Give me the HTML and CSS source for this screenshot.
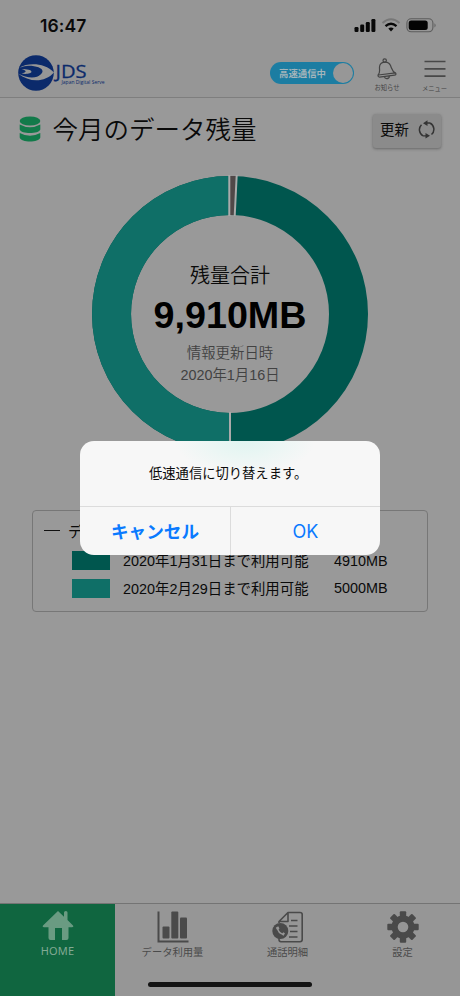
FILE: index.html
```html
<!DOCTYPE html>
<html lang="ja">
<head>
<meta charset="utf-8">
<title>JDS</title>
<link rel="stylesheet" href="styles.css">
</head>
<body>
<div class="screen">
  <header class="header">
    <div class="status">
      <span class="clock">16:47</span>
      <svg class="status-icons" width="84" height="16" viewBox="0 0 84 16">
        <g fill="#080808">
          <rect x="0.5" y="9" width="4" height="5" rx="1.2"/><rect x="6.2" y="6.5" width="4" height="7.500" rx="1.2"/><rect x="11.800" y="4" width="4" height="10" rx="1.2"/><rect x="17.400" y="1" width="4" height="13" rx="1.2"/>
          <path d="M37 13.500L34.300 10.600Q37 8.600 39.700 10.600Z"/>
        </g>
        <path d="M28.500 5Q37-2.500 45.500 5" fill="none" stroke="#777" stroke-width="2"/>
        <path d="M31.500 8.200Q37 3.400 42.500 8.200" fill="none" stroke="#080808" stroke-width="2.300"/>
        <rect x="52.900" y="0.800" width="26" height="13" rx="4.200" fill="none" stroke="#5c5c5c" stroke-width="1.100"/>
        <rect x="54.700" y="2.600" width="19" height="9.500" rx="2.500" fill="#030303"/>
        <path d="M80.500 5.200Q82.700 7.300 80.500 9.500Z" fill="#5c5c5c"/>
      </svg>
    </div>
    <div class="bar">
      <svg class="logo" width="90" height="38" viewBox="0 0 90 38">
        <circle cx="18" cy="19" r="17.800" fill="#0b2a6b"/>
        <path d="M1.500 13.500C10 8.500 27 8.500 36 18.500C27 28.500 12 29 0 19.500C9 24.500 19 24.500 22.500 20.500C28 14.500 13 10.500 1.500 13.500Z" fill="#969696"/>
        <path d="M4 12.500C13 10.500 25 13 24.500 17.500C24.200 21.500 13 24 5 20.800C12 21.500 18 20 18.500 17.800C19 15.500 11 12.500 4 12.500Z" fill="#0b2a6b"/>
        <path d="M3.500 15C9 15 13.500 16 13.500 17.800C13.500 19.500 8 20.500 3.500 19.500C9 18.500 9 16.500 3.500 15Z" fill="#969696"/>
        <text class="logo-name" x="37.500" y="23.500" textLength="31" lengthAdjust="spacingAndGlyphs">JDS</text>
        <text class="logo-sub" x="43.500" y="29.800" textLength="43" lengthAdjust="spacingAndGlyphs">Japan Digital Serve</text>
      </svg>
      <div class="toggle"><span>高速通信中</span><i></i></div>
      <div class="tool bell">
        <svg width="20" height="22" viewBox="0 0 20 22" fill="none" stroke="#444" stroke-width="1.200" stroke-linejoin="round">
          <circle cx="7.700" cy="2.600" r="1.700"/>
          <path d="M2.500 9C3 3.500 11 2.200 13.500 7.500C15 11 14.700 13 18.800 15.300Q19.300 17 17.500 17.200L2.500 19.100Q.8 19 1.100 17C3.500 14.500 2.300 12 2.500 9ZM1.300 17L18.500 14.900M7 18.800Q8.500 21.500 11.500 20.100Q12.500 19.200 12.300 18"/>
        </svg>
        <span>お知らせ</span>
      </div>
      <div class="tool menu">
        <svg width="22" height="18" viewBox="0 0 22 18" stroke="#484848" stroke-width="1.700"><path d="M.5 1.500H21.500M.5 8.800H21.500M.5 16.100H21.500"/></svg>
        <span>メニュー</span>
      </div>
    </div>
  </header>

  <main class="main">
    <div class="heading">
      <svg width="22" height="27" viewBox="0 0 22 27" fill="#127a4a">
        <ellipse cx="11" cy="5" rx="10.300" ry="4.500"/>
        <path d="M.7 8.500Q11 14 21.300 8.500V13.500C20 18.300 2 18.300 .7 13.500Z"/>
        <path d="M.7 17Q11 22.500 21.300 17V21.500C20 26.800 2 26.800 .7 21.500Z"/>
      </svg>
      <h1>今月のデータ残量</h1>
      <button class="refresh"><span>更新</span>
        <svg width="17" height="19" viewBox="0 0 17 19" fill="none" stroke="#343434" stroke-width="1.500">
          <path d="M5 15.800A7 7 0 0 1 3.500 4.700M12 3A7 7 0 0 1 13.500 14.500"/>
          <path d="M5 3.200L9.500 .3V6ZM12 15.800L7.500 12.900V18.600Z" fill="#343434" stroke="none"/>
          <path d="M9 3H12M5 15.800H8" stroke-width="1.300"/>
        </svg>
      </button>
    </div>

    <section class="chart">
      <svg width="278" height="278" viewBox="0 0 278 278">
        <circle cx="139" cy="139" r="118.500" fill="none" stroke="#00564e" stroke-width="39"/>
        <path d="M139 257.500A118.500 118.500 0 0 1 139 20.500" fill="none" stroke="#0f6f67" stroke-width="39"/>
        <path d="M138.500 1H145L143 40H138.500Z" fill="#504848"/>
        <path d="M138.300 0V41M145.700 0L143.700 41M139 237V278" stroke="#aaa" stroke-width="2"/>
      </svg>
      <div class="summary">
        <div class="sum-label">残量合計</div>
        <div class="sum-value">9,910MB</div>
        <div class="sum-date">情報更新日時<br>2020年1月16日</div>
      </div>
    </section>

    <section class="legend">
      <div class="legend-title"><i></i><span>デ</span></div>
      <div class="row"><i class="swatch dark"></i><span class="until">2020年1月31日まで利用可能</span><span>4910MB</span></div>
      <div class="row"><i class="swatch"></i><span class="until">2020年2月29日まで利用可能</span><span>5000MB</span></div>
    </section>
  </main>

  <nav class="tabs">
    <div class="tab active">
      <svg width="32" height="30" viewBox="0 0 32 30" fill="#6a9b82"><path d="M16 0L22 5.800V1.500Q22 0 23.800 0T25.500 1.500V9L31 14.500Q32 16.200 30 16.200H26.500V27Q26.500 29 24.500 29H20V17H13V29H8.500Q6.500 29 6.500 27V16.200H2Q0 16.200 1 14.500Z"/></svg>
      <span>HOME</span>
    </div>
    <div class="tab">
      <svg width="32" height="32" viewBox="0 0 32 32" fill="#4a4a4a"><path d="M.5 .5H2.500V29.500H31.500V31.500H.5Z"/><rect x="5.500" y="15.500" width="7" height="12" rx="1"/><rect x="14.300" y=".5" width="7" height="27" rx="1"/><rect x="23" y="6.500" width="7" height="21" rx="1"/></svg>
      <span>データ利用量</span>
    </div>
    <div class="tab">
      <svg width="32" height="32" viewBox="0 0 32 32" fill="none" stroke="#4a4a4a" stroke-width="1.800"><path d="M7 12V10.500L16 1.500H28Q30.200 1.500 30.200 3.500V28.500Q30.200 30.700 28 30.700H9Q7 30.700 7 28.500V26M7 10.500H16V1.500M19 9.500H25.500M17 15H25.500M18 20.500H25.500M17 26H25.500" stroke-linejoin="round" stroke-width="1.600"/><circle cx="8.300" cy="20" r="8" fill="#4a4a4a" stroke="none"/><path d="M5.500 16.500Q6 22.500 12 23.500" stroke="#969696" stroke-width="1.600"/><path d="M5 16L6.300 18.200M10.500 22.500L12.300 23.500" stroke="#969696" stroke-width="2.800"/></svg>
      <span>通話明細</span>
    </div>
    <div class="tab">
      <svg width="32" height="32" viewBox="-16 -16 32 32">
        <g fill="#4a4a4a"><circle r="11.500"/><g id="teeth"><rect x="-3.200" y="-15.700" width="6.400" height="31.400" rx="1"/><rect x="-15.700" y="-3.200" width="31.400" height="6.400" rx="1"/></g><use href="#teeth" transform="rotate(45)"/></g><circle r="5.300" fill="#969696"/>
      </svg>
      <span>設定</span>
    </div>
  </nav>

  <div class="home-indicator"></div>

  <div class="dialog" role="alertdialog">
    <p>低速通信に切り替えます。</p>
    <div class="actions"><button class="cancel">キャンセル</button><button>OK</button></div>
  </div>
</div>
</body>
</html>
```

FILE: styles.css
```css
* { box-sizing: border-box; }
body { margin: 0; background: #999; font-family: "Liberation Sans", "Noto Sans CJK JP", sans-serif; color: #0a0a0a; }
button { border: 0; padding: 0; background: none; font: inherit; color: inherit; }
.screen { position: relative; width: 460px; height: 996px; display: flex; flex-direction: column; overflow: hidden; }

.header { height: 98px; background: #969696; border-bottom: 1px solid #7e7e7e; }
.status { display: flex; justify-content: space-between; height: 52px; padding: 16px 22px 0 40px; }
.clock { font: 600 17.5px/20px Inter, sans-serif; letter-spacing: .1px; }
.status-icons { margin-top: 2px; }
.bar { display: flex; align-items: flex-start; height: 45px; padding: 2px 13px 0 18px; }
.logo { margin-right: auto; }
.logo-name { font: 500 18px "Open Sans", sans-serif; fill: #0b2a6b; stroke: #0b2a6b; stroke-width: .3px; }
.logo-sub { font: 5px "Open Sans", sans-serif; fill: #0b2a6b; }
.toggle { display: flex; align-items: center; justify-content: space-between; width: 84px; height: 22px; margin: 8px 20px 0 0; padding: 0 1px 0 9px; border-radius: 11px; background: #1c7da2; color: #a3b4ba; font-size: 9.400px; font-weight: 700; }
.toggle i { width: 20px; height: 20px; border-radius: 50%; background: #979797; }
.tool { display: flex; flex-direction: column; align-items: center; color: #444; font-size: 6.300px; line-height: 9px; white-space: nowrap; }
.tool svg { display: block; }
.bell { width: 26px; margin: 4px 22px 0 0; }
.bell svg { margin-bottom: 3px; }
.menu { width: 25px; margin-top: 6px; }
.menu svg { margin-bottom: 6px; }

.main { flex: 1; display: flex; flex-direction: column; }
.heading { display: flex; align-items: center; height: 63px; padding: 0 19px 0 19px; }
.heading h1 { flex: 1; margin: 0 0 0 11.500px; font-size: 25.500px; font-weight: 350; line-height: 34px; }
.refresh { display: flex; align-items: center; justify-content: space-between; width: 68px; height: 34px; padding: 0 6px 2px 7px; margin-top: 2px; border-radius: 3px; background: #8b8b8b; box-shadow: 0 1px 3px #666; font-size: 14.400px; }
.refresh span { padding-bottom: 2px; }
.chart { display: grid; place-items: center; width: 278px; height: 278px; margin: 13.500px auto 0; }
.chart svg, .summary { grid-area: 1 / 1; }
.chart svg { display: block; }
.summary { padding-top: 20px; text-align: center; }
.sum-label { font-size: 20px; font-weight: 350; line-height: 30px; }
.sum-value { font-size: 37.700px; font-weight: 700; line-height: 48px; color: #000; }
.sum-date { font-size: 14.400px; font-weight: 350; line-height: 21.500px; color: #424242; margin-top: 4px; }
.legend { width: 396px; height: 102px; margin: 57.500px 0 0 32px; padding: 7px 0 0 11px; border: 1px solid #777; border-radius: 4px; font-size: 14.400px; }
.legend-title { display: flex; align-items: center; gap: 8px; height: 29px; font-size: 15px; }
.legend-title i { width: 16px; height: 1.500px; background: #111; margin-bottom: 4px; }
.legend-title span { margin-bottom: 5px; }
.row { display: flex; align-items: center; height: 27.500px; padding-left: 28px; white-space: nowrap; }
.row span { padding-bottom: 2px; }
.row span:last-child { padding-bottom: 0; }
.swatch { width: 38px; height: 19px; margin-right: 13px; background: #0f6f67; }
.swatch.dark { background: #00564e; }
.until { width: 211px; }

.tabs { display: grid; grid-template-columns: repeat(4, 1fr); height: 93px; border-top: 1px solid #747474; background: #969696; }
.tab { display: flex; flex-direction: column; align-items: center; padding-top: 7px; color: #4a4a4a; font-size: 10.300px; line-height: 16px; }
.tab svg { display: block; margin-bottom: 2px; }
.tab.active { background: #106640; color: #82aa94; font: 11px/15px "Noto Sans", sans-serif; letter-spacing: .2px; }
.home-indicator { position: absolute; left: 148px; bottom: 9px; width: 164px; height: 5px; border-radius: 3px; background: #141414; }

.dialog { position: absolute; left: 80px; top: 441px; width: 300px; height: 114px; display: grid; grid-template-rows: 65px 49px; border-radius: 14px; overflow: hidden; background: radial-gradient(ellipse 70px 34px at 165px 0, #e0f5f1, #f7f7f7); }
.dialog p { margin: 0; padding: 1px 0 0 69px; font-size: 13.300px; line-height: 64px; white-space: nowrap; }
.dialog p { padding-top: 1px; }
.actions { display: grid; grid-template-columns: 1fr 1fr; height: 49px; border-top: 1px solid #dcdcdc; color: #0a7aff; font-size: 18px; }
.actions button + button { border-left: 1px solid #dcdcdc; font-family: Inter, sans-serif; }
.actions .cancel { padding-bottom: 1px; font-size: 17.600px; font-weight: 700; }
```
